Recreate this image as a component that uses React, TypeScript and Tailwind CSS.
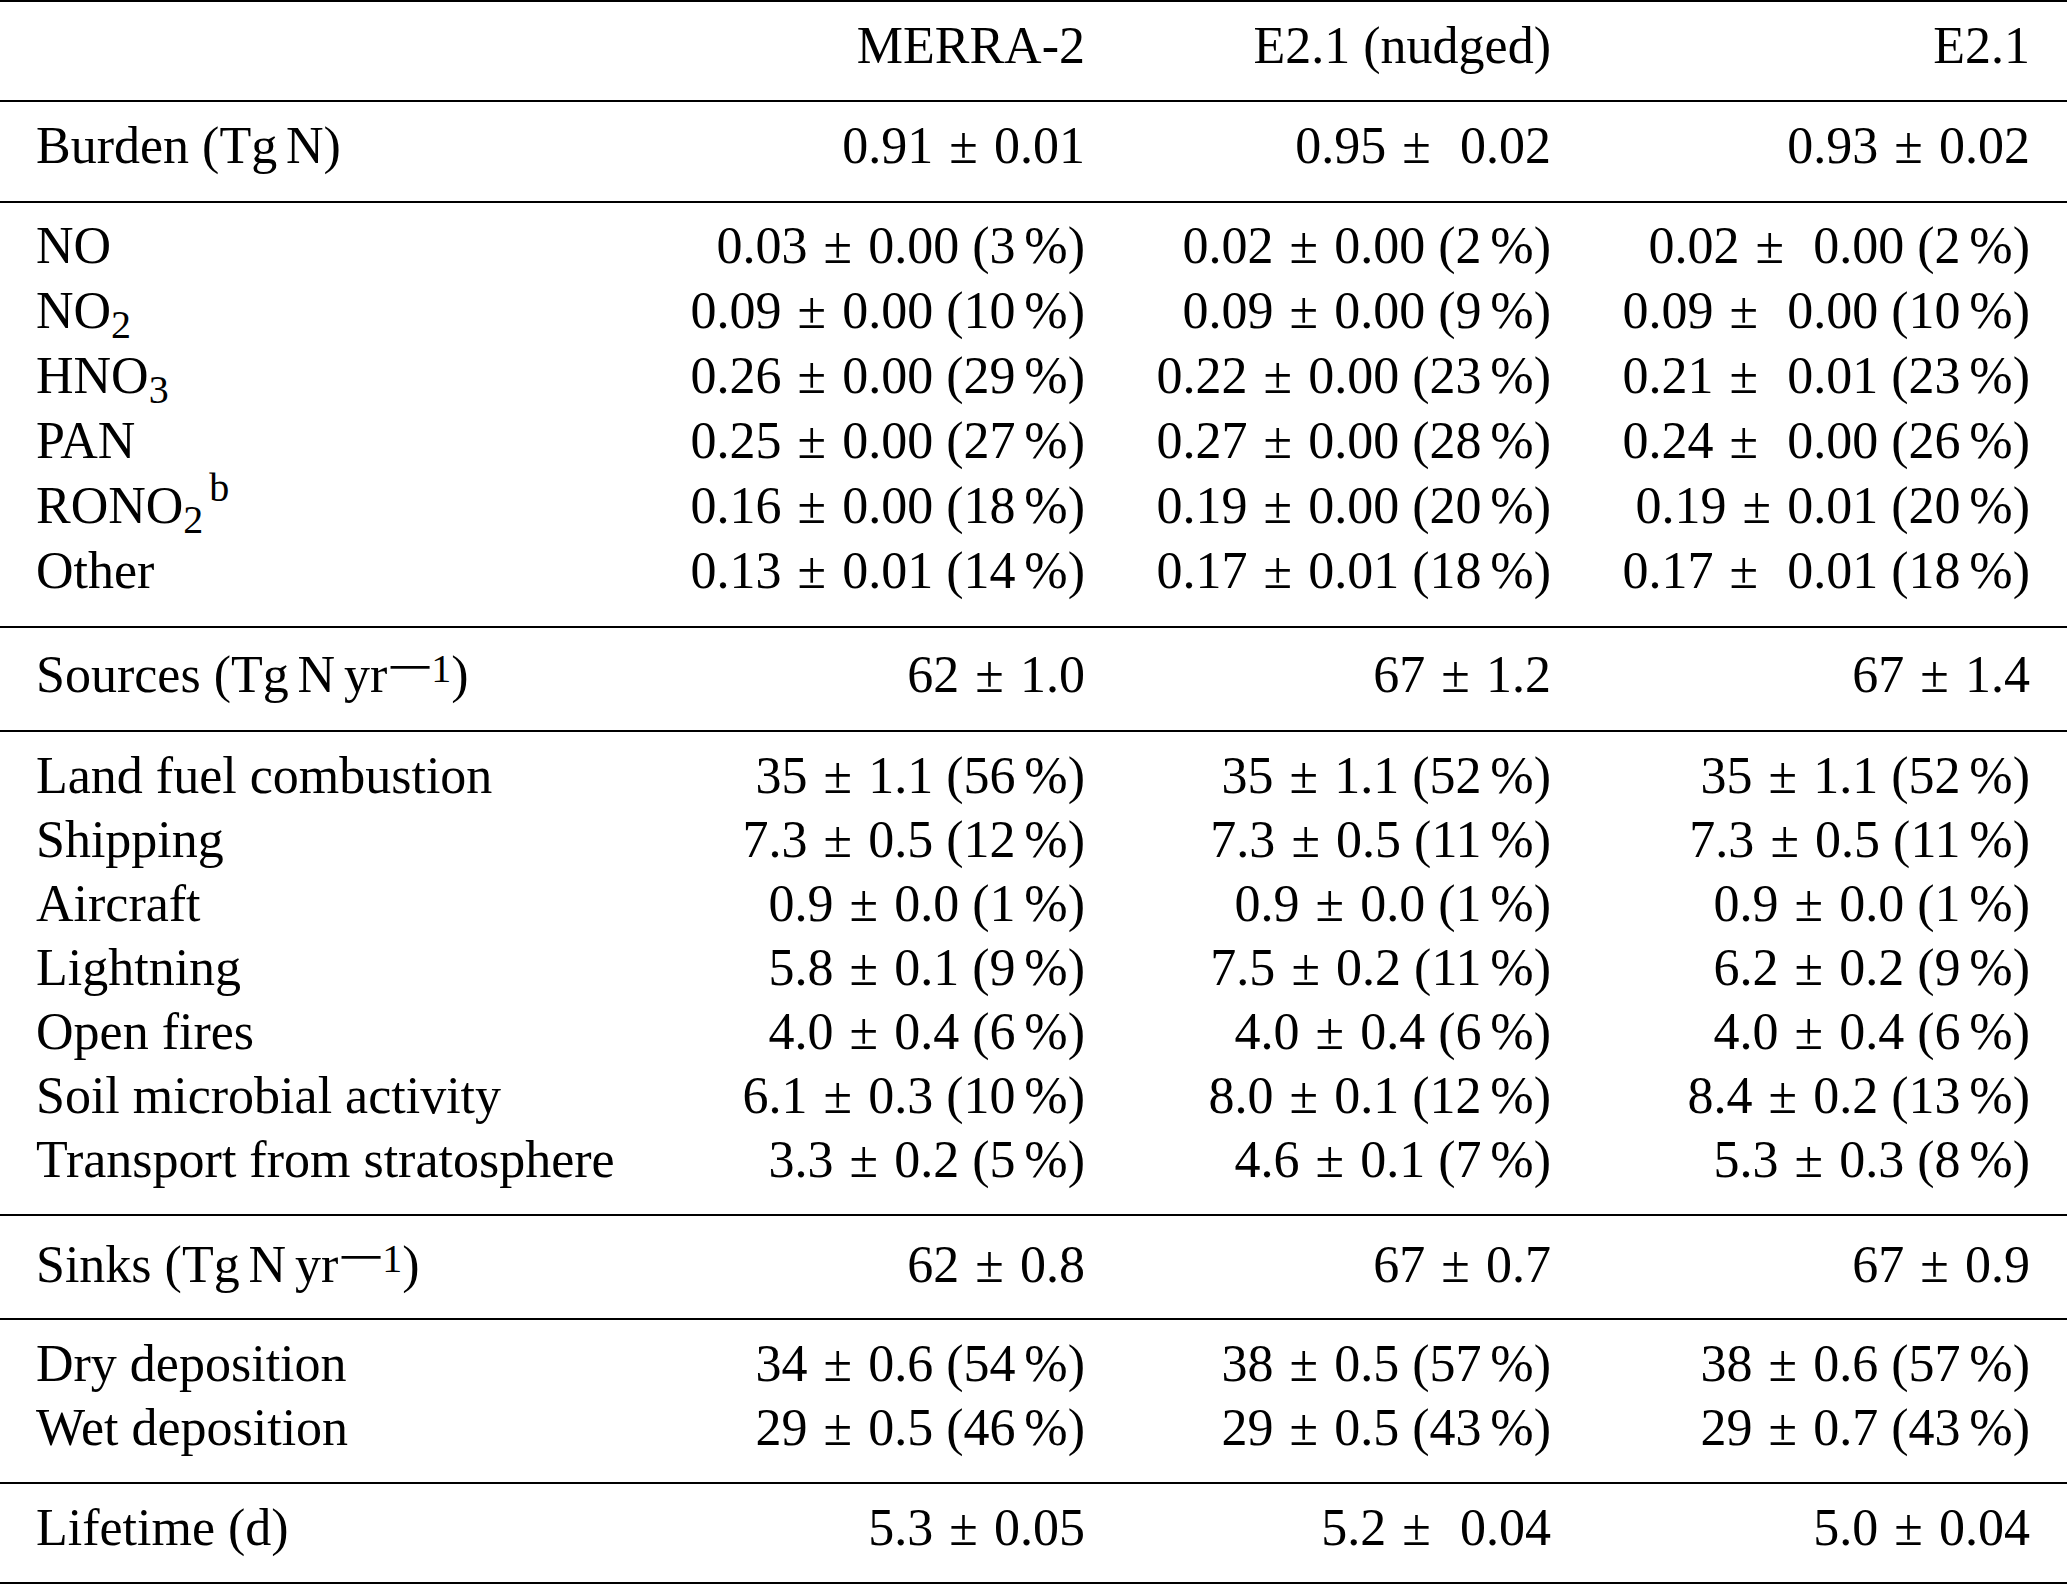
import type { ReactNode } from 'react'

type Row = { label: ReactNode; cells: ReactNode[] }

// number ± error, optional share in percent; `wide` keeps the extra gap the source table has
function Val({ a, b, pct, wide }: { a: string; b: string; pct?: string; wide?: boolean }) {
  return (
    <span className="whitespace-nowrap">
      {a}
      <span className="mx-[0.31em]">±</span>
      {wide && <span className="inline-block w-[0.25em]" />}
      {b}
      {pct && (
        <>
          <span className="inline-block w-[0.25em]" />({pct}
          <span className="ml-[0.17em]">%</span>)
        </>
      )}
    </span>
  )
}

const Sub = ({ children }: { children: ReactNode }) => (
  <span className="relative top-[10px] text-[40px] leading-none">{children}</span>
)

const FootMark = ({ children }: { children: ReactNode }) => (
  <span className="relative -top-[22px] ml-[6px] text-[40px] leading-none">{children}</span>
)

// "−1" exponent with the long math minus
const PerExp = () => (
  <span className="relative -top-[10px] ml-[2px] text-[40px] leading-none">
    <span className="relative -top-[1px] inline-block w-[42px] scale-x-[2.1] scale-y-[1.4] text-center">−</span>1
  </span>
)

const perYear = (word: string) => (
  <>
    {word} (Tg<span className="ml-[0.17em]">N</span>
    <span className="ml-[0.17em]">yr</span>
    <PerExp />)
  </>
)

const burden: Row = {
  label: (
    <>
      Burden (Tg<span className="ml-[0.17em]">N</span>)
    </>
  ),
  cells: [<Val a="0.91" b="0.01" />, <Val a="0.95" b="0.02" wide />, <Val a="0.93" b="0.02" />],
}

const species: Row[] = [
  {
    label: 'NO',
    cells: [
      <Val a="0.03" b="0.00" pct="3" />,
      <Val a="0.02" b="0.00" pct="2" />,
      <Val a="0.02" b="0.00" pct="2" wide />,
    ],
  },
  {
    label: (
      <>
        NO<Sub>2</Sub>
      </>
    ),
    cells: [
      <Val a="0.09" b="0.00" pct="10" />,
      <Val a="0.09" b="0.00" pct="9" />,
      <Val a="0.09" b="0.00" pct="10" wide />,
    ],
  },
  {
    label: (
      <>
        HNO<Sub>3</Sub>
      </>
    ),
    cells: [
      <Val a="0.26" b="0.00" pct="29" />,
      <Val a="0.22" b="0.00" pct="23" />,
      <Val a="0.21" b="0.01" pct="23" wide />,
    ],
  },
  {
    label: 'PAN',
    cells: [
      <Val a="0.25" b="0.00" pct="27" />,
      <Val a="0.27" b="0.00" pct="28" />,
      <Val a="0.24" b="0.00" pct="26" wide />,
    ],
  },
  {
    label: (
      <>
        RONO<Sub>2</Sub>
        <FootMark>b</FootMark>
      </>
    ),
    cells: [
      <Val a="0.16" b="0.00" pct="18" />,
      <Val a="0.19" b="0.00" pct="20" />,
      <Val a="0.19" b="0.01" pct="20" />,
    ],
  },
  {
    label: 'Other',
    cells: [
      <Val a="0.13" b="0.01" pct="14" />,
      <Val a="0.17" b="0.01" pct="18" />,
      <Val a="0.17" b="0.01" pct="18" wide />,
    ],
  },
]

const sources: Row = {
  label: perYear('Sources'),
  cells: [<Val a="62" b="1.0" />, <Val a="67" b="1.2" />, <Val a="67" b="1.4" />],
}

const sourceRows: Row[] = [
  {
    label: 'Land fuel combustion',
    cells: [<Val a="35" b="1.1" pct="56" />, <Val a="35" b="1.1" pct="52" />, <Val a="35" b="1.1" pct="52" />],
  },
  {
    label: 'Shipping',
    cells: [<Val a="7.3" b="0.5" pct="12" />, <Val a="7.3" b="0.5" pct="11" />, <Val a="7.3" b="0.5" pct="11" />],
  },
  {
    label: 'Aircraft',
    cells: [<Val a="0.9" b="0.0" pct="1" />, <Val a="0.9" b="0.0" pct="1" />, <Val a="0.9" b="0.0" pct="1" />],
  },
  {
    label: 'Lightning',
    cells: [<Val a="5.8" b="0.1" pct="9" />, <Val a="7.5" b="0.2" pct="11" />, <Val a="6.2" b="0.2" pct="9" />],
  },
  {
    label: 'Open fires',
    cells: [<Val a="4.0" b="0.4" pct="6" />, <Val a="4.0" b="0.4" pct="6" />, <Val a="4.0" b="0.4" pct="6" />],
  },
  {
    label: 'Soil microbial activity',
    cells: [<Val a="6.1" b="0.3" pct="10" />, <Val a="8.0" b="0.1" pct="12" />, <Val a="8.4" b="0.2" pct="13" />],
  },
  {
    label: 'Transport from stratosphere',
    cells: [<Val a="3.3" b="0.2" pct="5" />, <Val a="4.6" b="0.1" pct="7" />, <Val a="5.3" b="0.3" pct="8" />],
  },
]

const sinks: Row = {
  label: perYear('Sinks'),
  cells: [<Val a="62" b="0.8" />, <Val a="67" b="0.7" />, <Val a="67" b="0.9" />],
}

const sinkRows: Row[] = [
  {
    label: 'Dry deposition',
    cells: [<Val a="34" b="0.6" pct="54" />, <Val a="38" b="0.5" pct="57" />, <Val a="38" b="0.6" pct="57" />],
  },
  {
    label: 'Wet deposition',
    cells: [<Val a="29" b="0.5" pct="46" />, <Val a="29" b="0.5" pct="43" />, <Val a="29" b="0.7" pct="43" />],
  },
]

const lifetime: Row = {
  label: 'Lifetime (d)',
  cells: [<Val a="5.3" b="0.05" />, <Val a="5.2" b="0.04" wide />, <Val a="5.0" b="0.04" />],
}

function TableRow({ row, tall }: { row: Row; tall?: boolean }) {
  return (
    <div
      className={
        tall
          ? 'grid h-[65px] grid-cols-[599px_450px_466px_479px] leading-[65px]'
          : 'grid h-[64px] grid-cols-[599px_450px_466px_479px] leading-[64px]'
      }
    >
      <div className="whitespace-nowrap">{row.label}</div>
      {row.cells.map((c, i) => (
        <div key={i} className="text-right">
          {c}
        </div>
      ))}
    </div>
  )
}

export default function App() {
  return (
    <div className="min-h-[1585px] w-[2067px] bg-white font-['Liberation_Serif','Times_New_Roman',serif] text-[52px] text-black">
      {/* column heads */}
      <div className="border-t-2 border-black px-[36px] pt-[12px] pb-[22px]">
        <TableRow row={{ label: '', cells: ['MERRA-2', 'E2.1 (nudged)', 'E2.1'] }} />
      </div>

      <div className="border-t-2 border-black px-[36px] pt-[12px] pb-[23px]">
        <TableRow row={burden} />
      </div>

      <div className="border-t-2 border-black px-[36px] pt-[10px] pb-[23px]">
        {species.map((r, i) => (
          <TableRow key={i} row={r} tall />
        ))}
      </div>

      <div className="border-t-2 border-black px-[36px] pt-[15px] pb-[23px]">
        <TableRow row={sources} />
      </div>

      <div className="border-t-2 border-black px-[36px] pt-[12px] pb-[22px]">
        {sourceRows.map((r, i) => (
          <TableRow key={i} row={r} />
        ))}
      </div>

      <div className="border-t-2 border-black px-[36px] pt-[17px] pb-[21px]">
        <TableRow row={sinks} />
      </div>

      <div className="border-t-2 border-black px-[36px] pt-[12px] pb-[22px]">
        {sinkRows.map((r, i) => (
          <TableRow key={i} row={r} />
        ))}
      </div>

      <div className="border-y-2 border-black px-[36px] pt-[12px] pb-[22px]">
        <TableRow row={lifetime} />
      </div>
    </div>
  )
}
